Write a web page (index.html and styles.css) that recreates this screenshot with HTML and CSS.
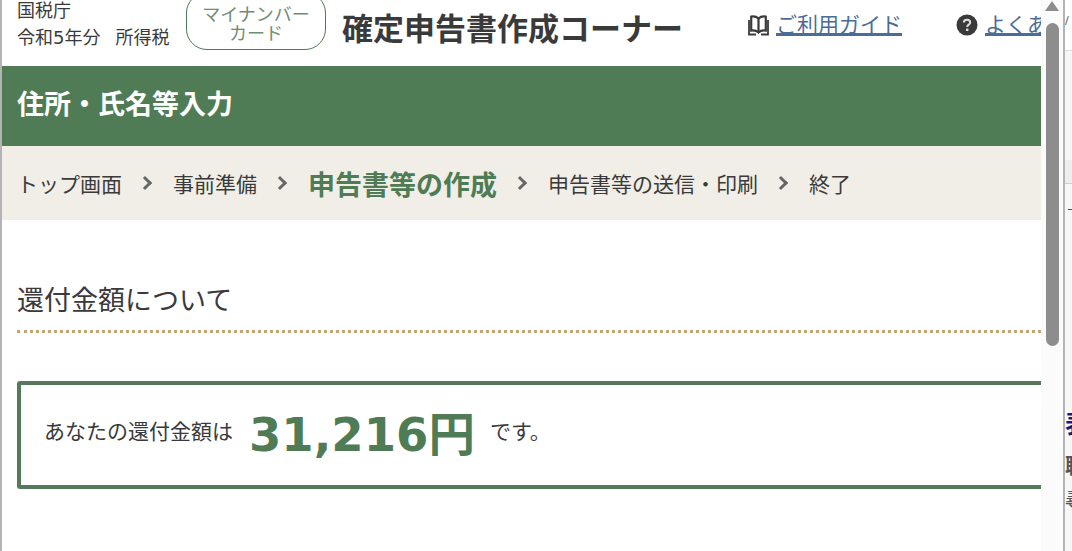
FILE: index.html
```html
<!DOCTYPE html>
<html lang="ja">

<head>
    <title>確定申告書作成コーナー</title>
    <meta charset="utf-8">
    <link rel="stylesheet" href="styles.css">
</head>

<body>
    <div class="window">
        <div class="edge-left"></div>

        <div class="dialog">
            <div class="top">
                <div class="agency">
                    <p>国税庁</p>
                    <p>令和5年分<span class="tax">所得税</span></p>
                </div>
                <div class="pill">マイナンバー<br>カード</div>
                <div class="corner">確定申告書作成コーナー</div>
                <a class="guide" href="#">
                    <svg class="icon" width="21" height="22" viewBox="0 0 21 22">
                        <path d="M10.5 4.5C8.5 2.6 6 2.2 3.2 2.6V16.6C6 16.2 8.5 16.6 10.5 18.5C12.5 16.6 15 16.2 17.8 16.6V2.6C15 2.2 12.5 2.6 10.5 4.5Z" fill="none" stroke="#3a3a3a" stroke-width="2.2"/>
                        <path d="M10.5 4.5V18.5" stroke="#3a3a3a" stroke-width="2.2"/>
                        <path d="M1 6V20.5H8M13 20.5H20V6" fill="none" stroke="#3a3a3a" stroke-width="1.8"/>
                    </svg>
                    <span>ご利用ガイド</span>
                </a>
                <a class="faq" href="#">
                    <svg class="icon" width="22" height="22" viewBox="0 0 22 22">
                        <circle cx="11" cy="11" r="10.5" fill="#3a3a3a"/>
                        <path d="M7.8 8.6C7.8 6.8 9.2 5.7 11 5.7C12.9 5.7 14.2 6.8 14.2 8.4C14.2 10.6 11.2 10.6 11.2 13" fill="none" stroke="#ddd" stroke-width="2"/>
                        <rect x="10" y="14.6" width="2.4" height="2.4" fill="#ddd"/>
                    </svg>
                    <span>よくある質問</span>
                </a>
            </div>

            <div class="title-bar">住所・氏名等入力</div>

            <ol class="steps">
                <li>トップ画面</li>
                <li class="arrow"></li>
                <li>事前準備</li>
                <li class="arrow"></li>
                <li class="current">申告書等の作成</li>
                <li class="arrow"></li>
                <li>申告書等の送信・印刷</li>
                <li class="arrow"></li>
                <li>終了</li>
            </ol>

            <div class="content">
                <h2>還付金額について</h2>
                <div class="refund">
                    <span>あなたの還付金額は</span>
                    <strong>31,216円</strong>
                    <span>です。</span>
                </div>
            </div>
        </div>

        <div class="scrollbar">
            <div class="scroll-up"></div>
            <div class="thumb"></div>
        </div>

        <!-- page under the dialog, only a sliver of it shows -->
        <div class="behind">
            <div class="band band-top"><span class="scrap">/</span></div>
            <div class="band band-mid"></div>
            <div class="band band-dark"></div>
            <div class="band band-low">
                <p class="scrap-dash">ー</p>
                <p class="behind-link">表</p>
                <p class="behind-bold">職</p>
                <p class="behind-text">尋</p>
            </div>
        </div>
    </div>
</body>

</html>
```

FILE: styles.css
```css
* {
    box-sizing: border-box;
}

html,
body {
    margin: 0;
    height: 100%;
    overflow: hidden;
}

body {
    font-family: "DejaVu Sans", "Noto Sans CJK JP", sans-serif;
    color: #3a3a3a;
    background-color: #fff;
}

.window {
    display: flex;
    height: 551px;
}

.edge-left {
    width: 2px;
    background-color: #b4b4b4;
}

.dialog {
    width: 1039px;
    overflow: hidden;
    background-color: #fff;
}

/* header row, cut off at the top because the dialog is scrolled */
.top {
    display: flex;
    align-items: center;
    height: 66px;
    padding: 0 0 16px 15px;
    white-space: nowrap;
}

.agency {
    width: 169px;
    flex: none;
    margin-top: -3px;
    font-size: 18px;
    line-height: 27px;
}

.agency p {
    margin: 0;
}

.tax {
    margin-left: 15px;
}

.pill {
    flex: none;
    width: 140px;
    height: 58px;
    margin-top: -8px;
    padding-top: 12px;
    border: 1px solid #4f7a55;
    border-radius: 21px;
    color: #6e8d73;
    font-size: 18px;
    line-height: 19px;
    text-align: center;
}

.corner {
    flex: none;
    width: 406px;
    margin: 2px 0 0 16px;
    font-size: 31px;
    font-weight: 700;
}

.guide,
.faq {
    flex: none;
    display: flex;
    align-items: center;
    gap: 7px;
    font-size: 21px;
    color: #4a6d98;
}

.guide {
    width: 208px;
}

.guide span,
.faq span {
    margin-bottom: 4px;
    text-decoration: underline;
    text-decoration-thickness: 2px;
    text-underline-offset: 1px;
}

.icon {
    flex: none;
}

.title-bar {
    height: 80px;
    padding-left: 15px;
    background-color: #4f7c54;
    color: #fff;
    font-size: 27px;
    font-weight: 700;
    line-height: 77px;
}

.steps {
    display: flex;
    align-items: center;
    height: 74px;
    margin: 0;
    padding: 0 0 0 15px;
    list-style: none;
    background-color: #f0eee7;
    font-size: 21px;
}

.steps li {
    white-space: nowrap;
}

.steps .current {
    color: #4f7c54;
    font-size: 27px;
    font-weight: 700;
}

.steps .arrow {
    width: 10px;
    height: 10px;
    margin: 0 23px 0 18px;
    border-top: 3px solid #666;
    border-right: 3px solid #666;
    transform: rotate(45deg);
}

.content {
    padding: 0 0 0 15px;
}

h2 {
    height: 113px;
    margin: 0;
    padding-top: 61px;
    border-bottom: 3px dotted #c4a56f;
    font-size: 27px;
    font-weight: 400;
    line-height: 40px;
}

.refund {
    display: flex;
    align-items: center;
    width: 1040px;
    height: 108px;
    margin-top: 48px;
    padding: 0 0 10px 23px;
    border: 4px solid #56795a;
    border-radius: 3px;
    font-size: 21px;
}

.refund strong {
    margin: 0 15px 0 16px;
    color: #4f7c54;
    font-size: 46.5px;
    font-weight: 700;
}

.scrollbar {
    flex: none;
    width: 22px;
    padding: 1px 4px 0 5px;
    background-color: #fbfbfb;
}

.scroll-up {
    width: 0;
    margin: 0 0 12px -1px;
    border-left: 7.5px solid transparent;
    border-right: 7.5px solid transparent;
    border-bottom: 10px solid #8d8d8d;
}

.thumb {
    height: 323px;
    border-radius: 7px;
    background-color: #8d8d8d;
}

.behind {
    flex: 1;
    overflow: hidden;
    border-left: 2px solid #b4b4b4;
    white-space: nowrap;
}

.band-top {
    height: 51px;
    border-bottom: 1px solid #dedede;
    background-color: #fff;
}

.scrap {
    display: block;
    font-size: 11px;
    line-height: 42px;
    color: #555;
}

.band-mid {
    height: 109px;
    background-color: #f6f6f6;
}

.band-dark {
    height: 24px;
    border-bottom: 1px solid #cfcfcf;
    background-color: #eeeeee;
}

.band-low {
    height: 367px;
    background-color: #f7f7f7;
}

.band-low p {
    margin: 0;
}

.scrap-dash {
    height: 224px;
    padding: 15px 0 0 2px;
    font-size: 10px;
    line-height: 24px;
    color: #333;
}

.band-low .behind-link {
    color: #1a1a7a;
    font-size: 25px;
    font-weight: 700;
    line-height: 34px;
}

.band-low .behind-bold {
    margin-top: 8px;
    color: #555;
    font-size: 21px;
    font-weight: 700;
    line-height: 32px;
}

.band-low .behind-text {
    margin-top: 2px;
    color: #555;
    font-size: 19px;
    line-height: 32px;
}
```
